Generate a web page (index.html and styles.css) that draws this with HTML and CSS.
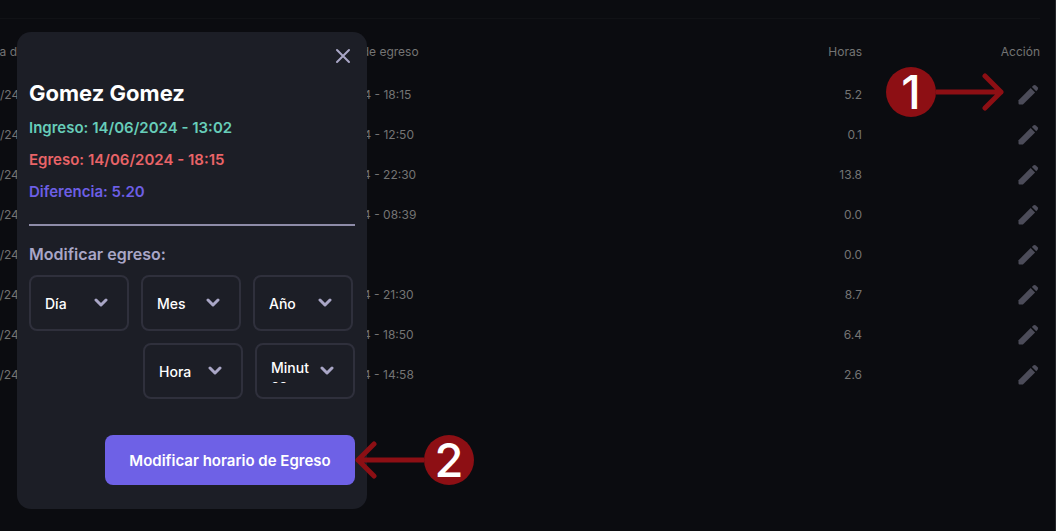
FILE: index.html
```
<!DOCTYPE html>
<html lang="es">
<head>
<meta charset="utf-8">
<meta name="viewport" content="width=device-width, initial-scale=1">
<title>Modificar egreso</title>
<link rel="stylesheet" href="styles.css">
</head>
<body>
<svg class="symbols" aria-hidden="true">
  <symbol id="pencil" viewBox="0 0 24 24">
    <path d="M2.500 17.200 14.700 5 19.100 9.400 6.900 21.600H3.500Q2.500 21.600 2.500 20.600Z"/>
    <path d="M15.900 3.900 17.300 2.500Q18.600 1.500 19.900 2.500L21.600 4.200Q22.600 5.500 21.600 6.800L20.200 8.200Z"/>
  </symbol>
</svg>
<main class="page">
  <table class="records">
    <colgroup><col class="col-date"><col class="col-date"><col><col class="col-action"></colgroup>
    <thead>
      <tr><th>Fecha de ingreso</th><th>Fecha de egreso</th><th class="num">Horas</th><th class="num">Acción</th></tr>
    </thead>
    <tbody>
      <tr><td>14/06/24 - 13:02</td><td>14/06/24 - 18:15</td><td class="num">5.2</td><td class="num"><button class="edit" aria-label="Editar"><svg><use href="#pencil"/></svg></button></td></tr>
      <tr><td>14/06/24 - 12:44</td><td>14/06/24 - 12:50</td><td class="num">0.1</td><td class="num"><button class="edit" aria-label="Editar"><svg><use href="#pencil"/></svg></button></td></tr>
      <tr><td>13/06/24 - 08:42</td><td>13/06/24 - 22:30</td><td class="num">13.8</td><td class="num"><button class="edit" aria-label="Editar"><svg><use href="#pencil"/></svg></button></td></tr>
      <tr><td>13/06/24 - 08:39</td><td>13/06/24 - 08:39</td><td class="num">0.0</td><td class="num"><button class="edit" aria-label="Editar"><svg><use href="#pencil"/></svg></button></td></tr>
      <tr><td>13/06/24 - 08:38</td><td></td><td class="num">0.0</td><td class="num"><button class="edit" aria-label="Editar"><svg><use href="#pencil"/></svg></button></td></tr>
      <tr><td>12/06/24 - 12:48</td><td>12/06/24 - 21:30</td><td class="num">8.7</td><td class="num"><button class="edit" aria-label="Editar"><svg><use href="#pencil"/></svg></button></td></tr>
      <tr><td>12/06/24 - 12:26</td><td>12/06/24 - 18:50</td><td class="num">6.4</td><td class="num"><button class="edit" aria-label="Editar"><svg><use href="#pencil"/></svg></button></td></tr>
      <tr><td>12/06/24 - 12:22</td><td>12/06/24 - 14:58</td><td class="num">2.6</td><td class="num"><button class="edit" aria-label="Editar"><svg><use href="#pencil"/></svg></button></td></tr>
    </tbody>
  </table>
</main>

<section class="modal" role="dialog" aria-labelledby="modal-title">
  <button class="close" aria-label="Cerrar"><svg viewBox="0 0 16 16"><path d="M2 2 14 14M14 2 2 14"/></svg></button>
  <h1 class="name" id="modal-title">Gomez Gomez</h1>
  <p class="detail in">Ingreso: 14/06/2024 - 13:02</p>
  <p class="detail out">Egreso: 14/06/2024 - 18:15</p>
  <p class="detail diff">Diferencia: 5.20</p>
  <hr class="rule">
  <h2 class="subtitle">Modificar egreso:</h2>
  <div class="fields">
    <div class="field"><select aria-label="Día"><option>Día</option></select><svg class="chevron" viewBox="0 0 14 10"><path d="M2 2 7 7 12 2"/></svg></div>
    <div class="field"><select aria-label="Mes"><option>Mes</option></select><svg class="chevron" viewBox="0 0 14 10"><path d="M2 2 7 7 12 2"/></svg></div>
    <div class="field"><select aria-label="Año"><option>Año</option></select><svg class="chevron" viewBox="0 0 14 10"><path d="M2 2 7 7 12 2"/></svg></div>
  </div>
  <div class="fields time">
    <div class="field"><select aria-label="Hora"><option>Hora</option></select><svg class="chevron" viewBox="0 0 14 10"><path d="M2 2 7 7 12 2"/></svg></div>
    <div class="field"><select id="minutes"><option></option></select><label class="wrapped" for="minutes">Minutos</label><svg class="chevron" viewBox="0 0 14 10"><path d="M2 2 7 7 12 2"/></svg></div>
  </div>
  <button class="submit">Modificar horario de Egreso</button>
</section>

<div class="step step-one"><span class="step-number">1</span><svg class="arrow" viewBox="0 0 70 40"><path d="M0 20H65M49 4 65 20 49 36"/></svg></div>
<div class="step step-two"><svg class="arrow" viewBox="0 0 70 40"><path d="M70 20H4M20 4 4 20 20 36"/></svg><span class="step-number">2</span></div>
</body>
</html>
```
FILE: styles.css
```
* { box-sizing: border-box; }

body {
  position: relative;
  margin: 0;
  min-height: 100vh;
  overflow: hidden;
  background: #0b0c10;
  color: #747474;
  font-family: Inter, "Liberation Sans", sans-serif;
  font-size: 12px;
}

button, select { font: inherit; }
button { padding: 0; border: 0; background: none; cursor: pointer; }
.symbols { display: none; }

.page {
  min-height: 100vh;
  padding: 18px 15px 0 0;
  border-right: 1px solid #25262a;
}

.records {
  width: calc(100% + 32px);
  margin-left: -32px;
  table-layout: fixed;
  border-collapse: collapse;
  border-top: 1px solid #111216;
}
.col-date { width: 352px; }
.col-action { width: 178px; }
.records th { height: 56px; padding: 10px 0 0 4px; font-weight: 400; text-align: left; }
.records td { height: 40px; padding: 0; }
.records .num { text-align: right; }

.edit { display: block; margin-left: auto; width: 24px; height: 24px; }
.edit svg { display: block; width: 24px; height: 24px; fill: #4c4c59; }

.modal {
  position: absolute;
  top: 32px;
  left: 17px;
  display: flex;
  flex-direction: column;
  width: 350px;
  padding: 12px 12px 24px;
  border-radius: 14px;
  background: #1c1e26;
}
.close { align-self: flex-end; width: 24px; height: 24px; padding: 4px; }
.close svg { display: block; width: 16px; height: 16px; }
.close path, .chevron path {
  fill: none;
  stroke: #a9a6c6;
  stroke-width: 2;
  stroke-linecap: round;
  stroke-linejoin: round;
}
.chevron path { stroke-width: 3; }

.name { margin: 10px 0 8px; color: #fff; font-size: 22px; line-height: 30px; font-weight: 700; }
.detail { margin: 0 0 8px; font-size: 15px; line-height: 24px; font-weight: 600; }
.in { color: #67cdb9; }
.out { color: #e96468; }
.diff { color: #6d5fe5; }
.rule { width: 100%; height: 2px; margin: 12px 0 16px; border: 0; background: #8e8ca8; }
.subtitle { margin: 0 0 9px; color: #a9a6c6; font-size: 16px; line-height: 24px; font-weight: 600; }

.fields { display: flex; gap: 12px; margin-bottom: 12px; }
.time { justify-content: flex-end; margin-bottom: 36px; }
.field { position: relative; width: 100px; height: 56px; }
.field select {
  width: 100%;
  height: 100%;
  padding: 0 40px 0 14px;
  border: 2px solid #2f303c;
  border-radius: 8px;
  appearance: none;
  background: transparent;
  color: #fff;
  font-size: 14px;
  font-weight: 500;
}
.chevron { position: absolute; top: 23px; right: 21px; width: 14px; height: 10px; pointer-events: none; }
.wrapped {
  position: absolute;
  top: 16px;
  left: 16px;
  width: 42px;
  height: 24px;
  overflow: hidden;
  color: #fff;
  font-size: 14px;
  line-height: 17px;
  font-weight: 500;
  word-break: break-all;
  pointer-events: none;
}

.submit {
  align-self: flex-end;
  width: 250px;
  height: 50px;
  border-radius: 8px;
  background: #6e61e6;
  color: #fff;
  font-size: 15px;
  font-weight: 600;
}

.step { position: absolute; display: flex; align-items: center; }
.step-one { top: 67px; right: 50px; }
.step-two { top: 435px; left: 354px; }
.step-number {
  width: 50px;
  height: 50px;
  border-radius: 50%;
  background: #8d0f14;
  color: #fff;
  font-size: 47px;
  font-weight: 500;
  line-height: 50px;
  text-align: center;
}
.arrow { width: 70px; height: 40px; }
.arrow path { fill: none; stroke: #8d0f14; stroke-width: 5; stroke-linecap: round; stroke-linejoin: round; }
```
